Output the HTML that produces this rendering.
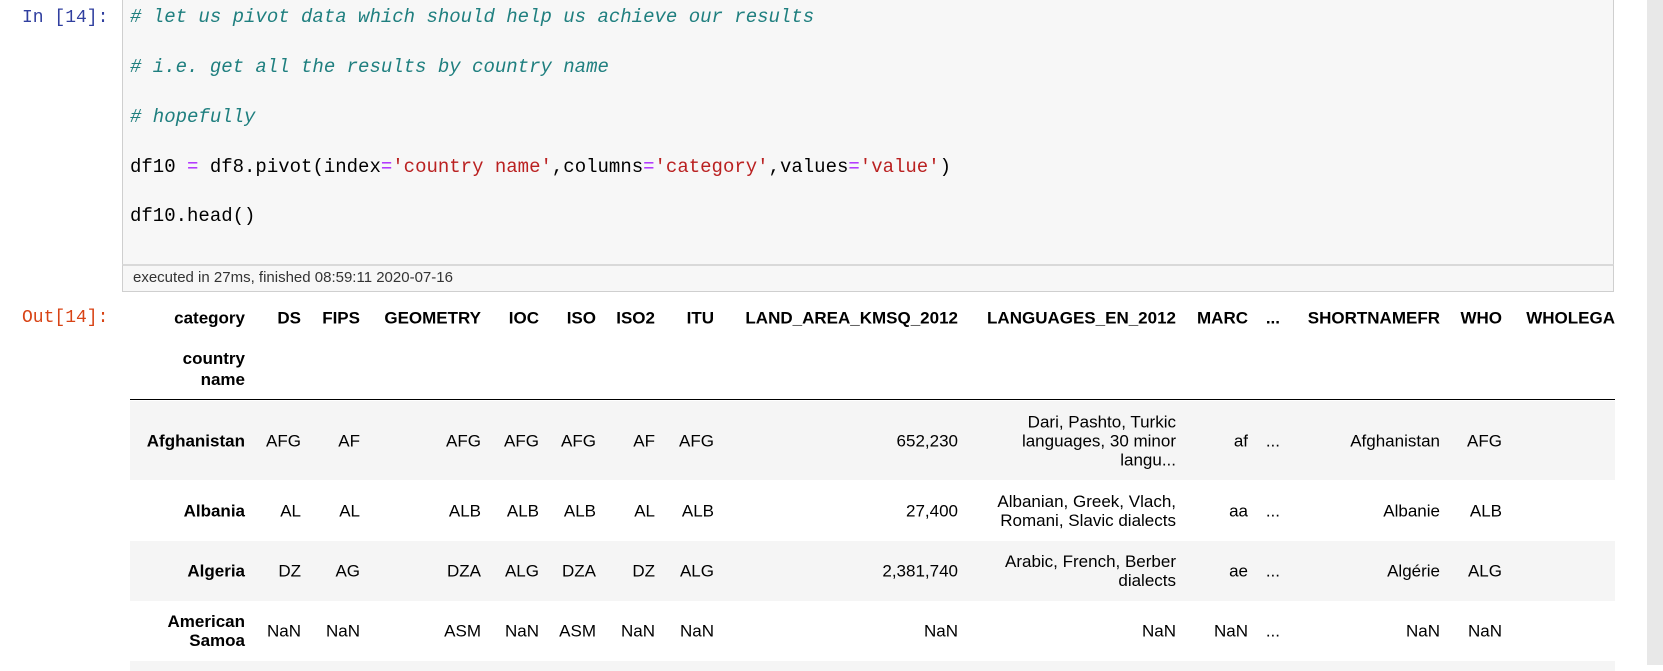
<!DOCTYPE html>
<html><head><meta charset="utf-8"><style>
*{margin:0;padding:0;box-sizing:border-box}
body{width:1663px;height:665px;overflow:hidden;background:#fff;position:relative;font-family:"Liberation Sans",Arial,sans-serif;color:#000}
.prompt{position:absolute;font-family:"Liberation Mono",monospace;font-size:18px;line-height:20px}
.box{position:absolute;left:122px;top:-2px;width:1492px;height:294px;background:#f7f7f7;border:1px solid #cfcfcf;border-radius:2px}
.code{position:absolute;left:130px;font-family:"Liberation Mono",monospace;font-size:19px;line-height:22px;white-space:pre;color:#000}
.c{color:#1f7f7f;font-style:italic}
.o{color:#aa22ff}
.s{color:#ba2121}
.exec{position:absolute;left:122px;top:264px;width:1492px;height:28px;border-top:2px solid #dcdcdc;border:1px solid #cfcfcf;border-top:2px solid #d9d9d9;background:#f7f7f7;font-size:15px;color:#333;padding:3px 0 0 10px}
.sb{position:absolute;left:1647px;top:0;width:16px;height:665px;background:#e8e8e8}
.row{position:absolute;left:130px;width:1485px}
.g{background:#f5f5f5}
.cell{position:absolute;top:50%;transform:translateY(-50%);text-align:right;font-size:17px;line-height:19px;white-space:nowrap;color:#000}
.b{font-weight:bold}
</style></head><body>
<div class="sb"></div>
<div class="prompt" style="left:22px;top:8px;color:#303f9f">In [14]:</div>
<div class="box"></div>
<div class="code" style="top:6px"><span class="c"># let us pivot data which should help us achieve our results</span></div>
<div class="code" style="top:56px"><span class="c"># i.e. get all the results by country name</span></div>
<div class="code" style="top:106px"><span class="c"># hopefully</span></div>
<div class="code" style="top:156px">df10 <span class="o">=</span> df8.pivot(index<span class="o">=</span><span class="s">'country name'</span>,columns<span class="o">=</span><span class="s">'category'</span>,values<span class="o">=</span><span class="s">'value'</span>)</div>
<div class="code" style="top:205px">df10.head()</div>
<div class="exec">executed in 27ms, finished 08:59:11 2020-07-16</div>
<div class="prompt" style="left:22px;top:308px;color:#d84315">Out[14]:</div>

<div class="row" style="top:298px;height:40px">
<span class="cell b" style="right:1370px">category</span>
<span class="cell b" style="right:1314px">DS</span>
<span class="cell b" style="right:1255px">FIPS</span>
<span class="cell b" style="right:1134px">GEOMETRY</span>
<span class="cell b" style="right:1076px">IOC</span>
<span class="cell b" style="right:1019px">ISO</span>
<span class="cell b" style="right:960px">ISO2</span>
<span class="cell b" style="right:901px">ITU</span>
<span class="cell b" style="right:657px">LAND_AREA_KMSQ_2012</span>
<span class="cell b" style="right:439px">LANGUAGES_EN_2012</span>
<span class="cell b" style="right:367px">MARC</span>
<span class="cell b" style="right:335px">...</span>
<span class="cell b" style="right:175px">SHORTNAMEFR</span>
<span class="cell b" style="right:113px">WHO</span>
<span class="cell b" style="right:0px">WHOLEGA</span>
</div>
<div class="row" style="top:348px;height:42px"><span class="cell b" style="right:1370px;line-height:21px">country<br>name</span></div>
<div style="position:absolute;left:130px;top:399px;width:1485px;height:1px;background:#000"></div>

<div class="row g" style="top:401px;height:79px">
<span class="cell b" style="right:1370px">Afghanistan</span>
<span class="cell" style="right:1314px">AFG</span>
<span class="cell" style="right:1255px">AF</span>
<span class="cell" style="right:1134px">AFG</span>
<span class="cell" style="right:1076px">AFG</span>
<span class="cell" style="right:1019px">AFG</span>
<span class="cell" style="right:960px">AF</span>
<span class="cell" style="right:901px">AFG</span>
<span class="cell" style="right:657px">652,230</span>
<span class="cell" style="right:439px">Dari, Pashto, Turkic<br>languages, 30 minor<br>langu...</span>
<span class="cell" style="right:367px">af</span>
<span class="cell" style="right:335px">...</span>
<span class="cell" style="right:175px">Afghanistan</span>
<span class="cell" style="right:113px">AFG</span>
</div>
<div class="row" style="top:480px;height:61px">
<span class="cell b" style="right:1370px">Albania</span>
<span class="cell" style="right:1314px">AL</span>
<span class="cell" style="right:1255px">AL</span>
<span class="cell" style="right:1134px">ALB</span>
<span class="cell" style="right:1076px">ALB</span>
<span class="cell" style="right:1019px">ALB</span>
<span class="cell" style="right:960px">AL</span>
<span class="cell" style="right:901px">ALB</span>
<span class="cell" style="right:657px">27,400</span>
<span class="cell" style="right:439px">Albanian, Greek, Vlach,<br>Romani, Slavic dialects</span>
<span class="cell" style="right:367px">aa</span>
<span class="cell" style="right:335px">...</span>
<span class="cell" style="right:175px">Albanie</span>
<span class="cell" style="right:113px">ALB</span>
</div>
<div class="row g" style="top:541px;height:60px">
<span class="cell b" style="right:1370px">Algeria</span>
<span class="cell" style="right:1314px">DZ</span>
<span class="cell" style="right:1255px">AG</span>
<span class="cell" style="right:1134px">DZA</span>
<span class="cell" style="right:1076px">ALG</span>
<span class="cell" style="right:1019px">DZA</span>
<span class="cell" style="right:960px">DZ</span>
<span class="cell" style="right:901px">ALG</span>
<span class="cell" style="right:657px">2,381,740</span>
<span class="cell" style="right:439px">Arabic, French, Berber<br>dialects</span>
<span class="cell" style="right:367px">ae</span>
<span class="cell" style="right:335px">...</span>
<span class="cell" style="right:175px">Algérie</span>
<span class="cell" style="right:113px">ALG</span>
</div>
<div class="row" style="top:601px;height:60px">
<span class="cell b" style="right:1370px">American<br>Samoa</span>
<span class="cell" style="right:1314px">NaN</span>
<span class="cell" style="right:1255px">NaN</span>
<span class="cell" style="right:1134px">ASM</span>
<span class="cell" style="right:1076px">NaN</span>
<span class="cell" style="right:1019px">ASM</span>
<span class="cell" style="right:960px">NaN</span>
<span class="cell" style="right:901px">NaN</span>
<span class="cell" style="right:657px">NaN</span>
<span class="cell" style="right:439px">NaN</span>
<span class="cell" style="right:367px">NaN</span>
<span class="cell" style="right:335px">...</span>
<span class="cell" style="right:175px">NaN</span>
<span class="cell" style="right:113px">NaN</span>
</div>
<div class="row g" style="top:661px;height:10px"></div>
</body></html>
